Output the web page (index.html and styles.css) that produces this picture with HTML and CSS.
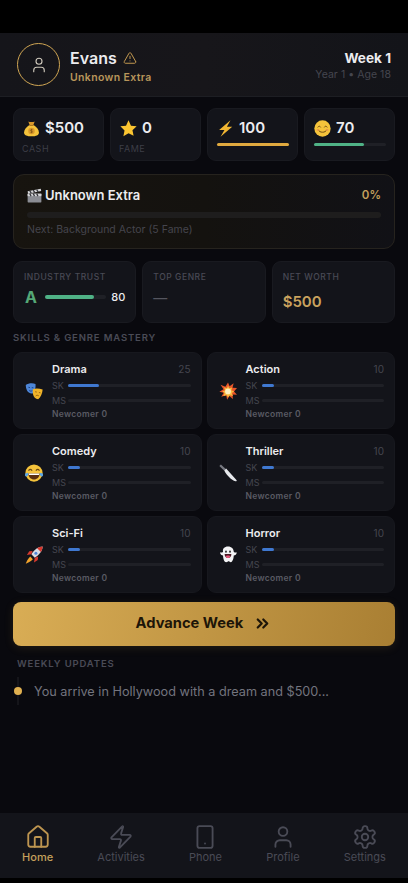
FILE: index.html
```html
<!DOCTYPE html>
<html lang="en">

<head>
    <meta charset="UTF-8">
    <meta name="viewport" content="width=device-width, initial-scale=1.0">
    <title>Hollywood Life</title>
    <link rel="stylesheet" href="styles.css">
</head>

<body>
    <svg class="defs" width="0" height="0">
        <symbol id="bag" viewBox="0 0 24 24">
            <path d="M7.500 2c2 1 7 1 9 0l-2 5.500h-5z" fill="#d9982b"/>
            <path d="M9 7h6c4.500 3 7.500 7 7.500 10.500 0 3.800-4 5.500-10.500 5.500s-10.500-1.700-10.500-5.500C1.500 14 4.500 10 9 7z" fill="#f5c33b"/>
            <path d="M9 7h6v1.300H9z" fill="#a8701c"/>
            <circle cx="12" cy="15.500" r="4.600" fill="#d9982b"/>
            <path d="M12 12.500v6M13.600 14c-1-.7-3.200-.5-3.200.7s3.200.8 3.200 2c0 1.200-2.200 1.300-3.200.6" stroke="#7d5010" stroke-width=".9" fill="none"/>
        </symbol>
        <symbol id="star" viewBox="0 0 24 24">
            <path d="M12 .5l3.500 7.500 8 .9-5.900 5.500 1.600 8L12 18.800l-7.200 4.100 1.600-8L.5 8.900l8-.9z" fill="#fbc531"/>
        </symbol>
        <symbol id="bolt" viewBox="0 0 24 24">
            <path d="M19 .5L3 14h7.500L5 23.500 21.500 9.500H14z" fill="#f2b632"/>
        </symbol>
        <symbol id="smile" viewBox="0 0 24 24">
            <circle cx="12" cy="12" r="11.500" fill="#f5c33b"/>
            <path d="M5.500 10c.8-1.800 3-1.800 3.800 0M14.700 10c.8-1.800 3-1.800 3.800 0" stroke="#6e4a12" stroke-width="1.300" fill="none" stroke-linecap="round"/>
            <path d="M6 14c1.500 4.500 10.500 4.500 12 0" stroke="#6e4a12" stroke-width="1.400" fill="none" stroke-linecap="round"/>
            <ellipse cx="5.500" cy="14" rx="2" ry="1.200" fill="#ef9a4a"/>
            <ellipse cx="18.500" cy="14" rx="2" ry="1.200" fill="#ef9a4a"/>
        </symbol>
        <symbol id="clapper" viewBox="0 0 24 24">
            <rect x="1" y="9" width="22" height="14" rx="1" fill="#8b8d94"/>
            <path d="M1 5L22 1l.7 3.800L1.700 9z" fill="#d4d5d8"/>
            <path d="M4.500 4.500l2.500 4M10 3.500l2.500 4M15.500 2.500l2.500 4" stroke="#33343a" stroke-width="1.900"/>
            <rect x="1" y="9" width="22" height="4" fill="#d4d5d8"/>
            <path d="M4.500 9l2 4M10 9l2 4M15.500 9l2 4" stroke="#33343a" stroke-width="1.900"/>
        </symbol>
        <symbol id="masks" viewBox="0 0 24 24">
            <path d="M1 4c3-2.500 9-3.200 13-1.500.5 4-.5 10-3.300 12.500-3 1-7-1-8.200-4C1.500 9 1 6.500 1 4z" fill="#4d86d8"/>
            <path d="M4.500 7l2.200.5M9 7.500l2.200.2M5.500 11c1 1.300 2.800 1.400 4.300.6" stroke="#173a78" stroke-width="1.100" fill="none"/>
            <path d="M10.500 9.500c3.500-1.500 8.500-1.200 13 .5-.2 5-2.500 10.500-6 13-3.500-.2-6-2.800-6.700-6.200-.5-2.400-.5-5-.3-7.300z" fill="#f0b429"/>
            <path d="M13.500 13l2.200.4M18.500 14l2.200.4M14 19c1-1.800 3.300-1.600 4.400-.5" stroke="#8a5a10" stroke-width="1.100" fill="none"/>
        </symbol>
        <symbol id="boom" viewBox="0 0 24 24">
            <path d="M12 .5l2.200 5 5.300-4-1.500 6 6 .5-4 4.500 4 4.500-6-.5 .5 6-4.700-3.700-3 4.700-1.200-6-6.600 2.300 3.300-5.500L.5 13l5.500-3.200L2 3.500l6.500 2.800z" fill="#e8562a"/>
            <path d="M12 4.500l1.700 3.800 3.800-1.100-1 3.800 3.800 1.600-3.200 2.200 1.600 3.800-4.300-.9L12 20.500l-1.900-3-4.300 1.100 1.600-4L4.500 12.500l3.500-1.600-1.300-3.800 3.800 1.100z" fill="#f8b93c"/>
            <circle cx="12" cy="12.500" r="3.800" fill="#fdf0c0"/>
        </symbol>
        <symbol id="laugh" viewBox="0 0 24 24">
            <circle cx="12" cy="12" r="11.500" fill="#f5c33b"/>
            <path d="M5 8.500c1-1.800 3-1.800 4.200 0M14.800 8.500c1.200-1.800 3.200-1.800 4.200 0" stroke="#6e4a12" stroke-width="1.400" fill="none" stroke-linecap="round"/>
            <path d="M4.500 12.500h15c0 5-3.500 8-7.500 8s-7.500-3-7.500-8z" fill="#5c3010"/>
            <path d="M5 12.500h14l-.4 2H5.400z" fill="#fff"/>
            <path d="M0 13c1.500-1 3-1.200 4.500-.5.300 2-1 4-3 4.200-1.500-.5-2-2.200-1.500-3.700zM24 13c-1.500-1-3-1.200-4.500-.5-.3 2 1 4 3 4.200 1.500-.5 2-2.200 1.500-3.700z" fill="#5aa7e8"/>
        </symbol>
        <symbol id="knife" viewBox="0 0 24 24">
            <path d="M.5 2.500L2.500.5 9 6.500 7 9z" fill="#777981"/>
            <path d="M7 8.500l2.500-2.500 14 15.500c.4.800-.4 1.900-1.500 1.500C16.500 21 10.500 15.500 7 8.500z" fill="#e6e8ec"/>
        </symbol>
        <symbol id="rocket" viewBox="0 0 24 24">
            <path d="M23.500.5c-5.500.3-11 3.500-15 10.500l4.500 4.500c6.500-4 10.500-10 10.500-15z" fill="#d8dbe2"/>
            <path d="M23.500.5c-2.500.1-5 .9-7.300 2.400l4.900 5c1.500-2.400 2.400-5 2.400-7.400z" fill="#d8392f"/>
            <circle cx="14.500" cy="9.500" r="2" fill="#4d86d8"/>
            <path d="M8.500 11L2.500 12l3.200-5 4.300-.5zM13 15.500L12 22l5-3.500.5-4.500z" fill="#d8392f"/>
            <path d="M7 14l3.500 3.500C8 20.500 3.500 22.500 1 23.500c1-2.500 3-7 6-9.500z" fill="#f2a32c"/>
        </symbol>
        <symbol id="ghost" viewBox="0 0 24 24">
            <path d="M12 .5c4.800 0 7.500 3 7.700 7.200.1 1 2.800 1.200 4 .5-.2 2.800-2.200 4.400-4 4.500-.2 3.400-.9 6-2.400 8-1.100 1.400-2.500.9-3.200.2-.8-.6-1.600-.7-2.600 0-1.200.9-2.900 1-4-.4-1.400-1.900-2-4.600-2.100-7.800-1.800-.1-3.800-1.700-4-4.500 1.200.7 3.900.5 4-.5C4.500 3.500 7.200.500 12 .5z" fill="#f4f4f6"/>
            <ellipse cx="9.300" cy="7.500" rx="1.200" ry="1.500" fill="#222"/>
            <ellipse cx="14.700" cy="7.500" rx="1.200" ry="1.500" fill="#222"/>
            <path d="M7.500 10.500h9c0 3.500-2 5.500-4.500 5.500s-4.500-2-4.500-5.500z" fill="#4a1a24"/>
            <path d="M9 13.500c1-1 5-1 6 0-.7 1.600-1.800 2.500-3 2.500s-2.300-.9-3-2.500z" fill="#e8557a"/>
        </symbol>
    </svg>

    <div class="notch"></div>

    <header class="top">
        <div class="avatar">
            <svg class="line thin" width="18" height="18" viewBox="0 0 24 24"><path d="M19 21v-2a4 4 0 0 0-4-4H9a4 4 0 0 0-4 4v2"/><circle cx="12" cy="7" r="4"/></svg>
        </div>
        <div class="who">
            <div class="name">Evans
                <svg class="line warn" width="14" height="14" viewBox="0 0 24 24"><path d="m21.730 18-8-14a2 2 0 0 0-3.480 0l-8 14A2 2 0 0 0 4 21h16a2 2 0 0 0 1.730-3"/><path d="M12 9v4"/><path d="M12 17h.01"/></svg>
            </div>
            <div class="rank">Unknown Extra</div>
        </div>
        <div class="when">
            <div class="week">Week 1</div>
            <div class="age">Year 1 • Age 18</div>
        </div>
    </header>

    <main class="content">
        <section class="stats">
            <div class="stat">
                <div class="stat_top"><svg class="emoji"><use href="#bag"/></svg>$500</div>
                <div class="stat_label">CASH</div>
            </div>
            <div class="stat">
                <div class="stat_top"><svg class="emoji"><use href="#star"/></svg>0</div>
                <div class="stat_label">FAME</div>
            </div>
            <div class="stat">
                <div class="stat_top"><svg class="emoji"><use href="#bolt"/></svg>100</div>
                <div class="stat_bar"><div class="fill gold" style="width:100%"></div></div>
            </div>
            <div class="stat">
                <div class="stat_top"><svg class="emoji"><use href="#smile"/></svg>70</div>
                <div class="stat_bar"><div class="fill green" style="width:70%"></div></div>
            </div>
        </section>

        <section class="career">
            <div class="career_top">
                <div class="career_title"><svg class="emoji"><use href="#clapper"/></svg>Unknown Extra</div>
                <div class="career_pct">0%</div>
            </div>
            <div class="career_bar"></div>
            <div class="career_next">Next: Background Actor (5 Fame)</div>
        </section>

        <section class="info">
            <div class="info_card">
                <div class="info_label">INDUSTRY TRUST</div>
                <div class="trust">
                    <span class="grade">A</span>
                    <div class="trust_bar"><div class="fill green" style="width:80%"></div></div>
                    <span class="trust_num">80</span>
                </div>
            </div>
            <div class="info_card">
                <div class="info_label">TOP GENRE</div>
                <div class="dash">—</div>
            </div>
            <div class="info_card">
                <div class="info_label">NET WORTH</div>
                <div class="worth">$500</div>
            </div>
        </section>

        <h2 class="section_title">SKILLS &amp; GENRE MASTERY</h2>

        <section class="genres">
            <div class="genre">
                <svg class="emoji"><use href="#masks"/></svg>
                <div class="genre_body">
                    <div class="genre_head"><span class="genre_name">Drama</span><span class="genre_val">25</span></div>
                    <div class="meter"><span>SK</span><div class="meter_bar"><div class="fill blue" style="width:25%"></div></div></div>
                    <div class="meter"><span>MS</span><div class="meter_bar"></div></div>
                    <div class="genre_rank">Newcomer 0</div>
                </div>
            </div>
            <div class="genre">
                <svg class="emoji"><use href="#boom"/></svg>
                <div class="genre_body">
                    <div class="genre_head"><span class="genre_name">Action</span><span class="genre_val">10</span></div>
                    <div class="meter"><span>SK</span><div class="meter_bar"><div class="fill blue" style="width:10%"></div></div></div>
                    <div class="meter"><span>MS</span><div class="meter_bar"></div></div>
                    <div class="genre_rank">Newcomer 0</div>
                </div>
            </div>
            <div class="genre">
                <svg class="emoji"><use href="#laugh"/></svg>
                <div class="genre_body">
                    <div class="genre_head"><span class="genre_name">Comedy</span><span class="genre_val">10</span></div>
                    <div class="meter"><span>SK</span><div class="meter_bar"><div class="fill blue" style="width:10%"></div></div></div>
                    <div class="meter"><span>MS</span><div class="meter_bar"></div></div>
                    <div class="genre_rank">Newcomer 0</div>
                </div>
            </div>
            <div class="genre">
                <svg class="emoji"><use href="#knife"/></svg>
                <div class="genre_body">
                    <div class="genre_head"><span class="genre_name">Thriller</span><span class="genre_val">10</span></div>
                    <div class="meter"><span>SK</span><div class="meter_bar"><div class="fill blue" style="width:10%"></div></div></div>
                    <div class="meter"><span>MS</span><div class="meter_bar"></div></div>
                    <div class="genre_rank">Newcomer 0</div>
                </div>
            </div>
            <div class="genre">
                <svg class="emoji"><use href="#rocket"/></svg>
                <div class="genre_body">
                    <div class="genre_head"><span class="genre_name">Sci-Fi</span><span class="genre_val">10</span></div>
                    <div class="meter"><span>SK</span><div class="meter_bar"><div class="fill blue" style="width:10%"></div></div></div>
                    <div class="meter"><span>MS</span><div class="meter_bar"></div></div>
                    <div class="genre_rank">Newcomer 0</div>
                </div>
            </div>
            <div class="genre">
                <svg class="emoji"><use href="#ghost"/></svg>
                <div class="genre_body">
                    <div class="genre_head"><span class="genre_name">Horror</span><span class="genre_val">10</span></div>
                    <div class="meter"><span>SK</span><div class="meter_bar"><div class="fill blue" style="width:10%"></div></div></div>
                    <div class="meter"><span>MS</span><div class="meter_bar"></div></div>
                    <div class="genre_rank">Newcomer 0</div>
                </div>
            </div>
        </section>

        <button class="advance">Advance Week
            <svg class="line bold" width="19" height="19" viewBox="0 0 24 24"><path d="m6 17 5-5-5-5"/><path d="m13 17 5-5-5-5"/></svg>
        </button>

        <div class="updates">
            <h2 class="section_title">WEEKLY UPDATES</h2>
            <div class="update">
                <div class="update_mark"><div class="update_dot"></div></div>
                <p>You arrive in Hollywood with a dream and $500...</p>
            </div>
        </div>
    </main>

    <nav class="tabs">
        <div class="tab active">
            <svg class="line" width="26" height="26" viewBox="0 0 24 24"><path d="M15 21v-8a1 1 0 0 0-1-1h-4a1 1 0 0 0-1 1v8"/><path d="M3 10a2 2 0 0 1 .709-1.528l7-5.999a2 2 0 0 1 2.582 0l7 5.999A2 2 0 0 1 21 10v9a2 2 0 0 1-2 2H5a2 2 0 0 1-2-2z"/></svg>
            <span>Home</span>
        </div>
        <div class="tab">
            <svg class="line" width="26" height="26" viewBox="0 0 24 24"><path d="M4 14a1 1 0 0 1-.78-1.630l9.900-10.200a.5.5 0 0 1 .86.46l-1.920 6.020A1 1 0 0 0 13 10h7a1 1 0 0 1 .78 1.630l-9.900 10.200a.5.5 0 0 1-.86-.46l1.920-6.020A1 1 0 0 0 11 14z"/></svg>
            <span>Activities</span>
        </div>
        <div class="tab">
            <svg class="line" width="26" height="26" viewBox="0 0 24 24"><rect width="14" height="20" x="5" y="2" rx="2" ry="2"/><path d="M12 18h.01"/></svg>
            <span>Phone</span>
        </div>
        <div class="tab">
            <svg class="line" width="26" height="26" viewBox="0 0 24 24"><path d="M19 21v-2a4 4 0 0 0-4-4H9a4 4 0 0 0-4 4v2"/><circle cx="12" cy="7" r="4"/></svg>
            <span>Profile</span>
        </div>
        <div class="tab">
            <svg class="line" width="26" height="26" viewBox="0 0 24 24"><path d="M12.220 2h-.44a2 2 0 0 0-2 2v.18a2 2 0 0 1-1 1.730l-.43.25a2 2 0 0 1-2 0l-.15-.08a2 2 0 0 0-2.730.73l-.22.38a2 2 0 0 0 .73 2.730l.15.1a2 2 0 0 1 1 1.720v.51a2 2 0 0 1-1 1.740l-.15.09a2 2 0 0 0-.73 2.730l.22.38a2 2 0 0 0 2.730.73l.15-.08a2 2 0 0 1 2 0l.43.25a2 2 0 0 1 1 1.730V20a2 2 0 0 0 2 2h.44a2 2 0 0 0 2-2v-.18a2 2 0 0 1 1-1.730l.43-.25a2 2 0 0 1 2 0l.15.08a2 2 0 0 0 2.730-.73l.22-.39a2 2 0 0 0-.73-2.730l-.15-.08a2 2 0 0 1-1-1.740v-.5a2 2 0 0 1 1-1.740l.15-.09a2 2 0 0 0 .73-2.730l-.22-.38a2 2 0 0 0-2.730-.73l-.15.08a2 2 0 0 1-2 0l-.43-.25a2 2 0 0 1-1-1.730V4a2 2 0 0 0-2-2z"/><circle cx="12" cy="12" r="3"/></svg>
            <span>Settings</span>
        </div>
    </nav>
</body>

</html>
```

FILE: styles.css
```css
* {
    box-sizing: border-box;
}

html, body {
    margin: 0;
    height: 883px;
    overflow: hidden;
}

body {
    display: flex;
    flex-direction: column;
    background-color: #000;
    color: #ececef;
    font-family: Inter, "Liberation Sans", sans-serif;
}

.defs {
    display: block;
    height: 0;
}

.line {
    fill: none;
    stroke: currentColor;
    stroke-width: 1.700;
    stroke-linecap: round;
    stroke-linejoin: round;
    flex: none;
}
.line.thin { stroke-width: 1.500; }
.line.bold { stroke-width: 2.800; }

.emoji {
    flex: none;
    width: 17px;
    height: 17px;
}

.fill {
    height: 100%;
    border-radius: 3px;
}
.gold { background-color: #e0a93f; }
.green { background-color: #4fb286; }
.blue { background-color: #3f78d0; }

.notch {
    height: 33px;
    flex: none;
}

/* header */
.top {
    display: flex;
    align-items: center;
    height: 64px;
    flex: none;
    padding: 0 13px 0 17px;
    background: linear-gradient(90deg, #15151a, #17161a 50%, #131419);
    border-bottom: 1px solid #1d1e23;
}

.avatar {
    display: flex;
    align-items: center;
    justify-content: center;
    width: 43px;
    height: 43px;
    border: 1.500px solid #cfa553;
    border-radius: 50%;
    color: #cfc9bc;
}

.who {
    margin-left: 10px;
    padding-top: 3px;
    flex: 1;
}

.name {
    display: flex;
    align-items: center;
    gap: 6px;
    font-size: 16px;
    font-weight: 600;
    line-height: 18px;
}

.warn {
    color: #c49a50;
}

.rank {
    margin-top: 4px;
    font-size: 10.500px;
    font-weight: 600;
    letter-spacing: .35px;
    color: #b8955a;
}

.when {
    text-align: right;
    padding: 1px 4px 0 0;
}

.week {
    font-size: 13.600px;
    font-weight: 700;
    line-height: 18px;
}

.age {
    margin-top: 1px;
    font-size: 10.500px;
    letter-spacing: .05px;
    color: #45464f;
}

/* main column */
.content {
    flex: 1;
    display: flex;
    flex-direction: column;
    padding: 11px 13px 0;
    background-color: #09090e;
}

.stats {
    display: grid;
    grid-template-columns: repeat(4, 1fr);
    gap: 6px;
    height: 53px;
}

.stat {
    padding: 9px 8px 0 9px;
    background-color: #13141a;
    border: 1px solid #191a20;
    border-radius: 9px;
}

.stat_top {
    display: flex;
    align-items: center;
    gap: 5px;
    font-size: 15px;
    font-weight: 600;
    line-height: 20px;
}

.stat_label {
    margin: 5px 0 0 -1px;
    font-size: 9px;
    letter-spacing: .5px;
    color: #3d3e47;
}

.stat_bar {
    height: 3px;
    margin-top: 5px;
    background-color: #1f2026;
    border-radius: 3px;
}

.career {
    height: 75px;
    margin-top: 13px;
    padding: 12px 13px 0;
    background: linear-gradient(90deg, #17140f, #14120f 50%, #111116);
    border: 1px solid #26231e;
    border-radius: 11px;
}

.career_top {
    display: flex;
    align-items: center;
    justify-content: space-between;
}

.career_title {
    display: flex;
    align-items: center;
    gap: 3px;
    font-size: 13px;
    font-weight: 600;
    line-height: 16px;
}

.career_title .emoji {
    width: 15px;
    height: 15px;
}

.career_pct {
    font-size: 11.500px;
    font-weight: 600;
    color: #c4a05c;
}

.career_bar {
    height: 6px;
    margin-top: 9px;
    background-color: #1e1d1d;
    border-radius: 3px;
}

.career_next {
    margin-top: 5px;
    font-size: 10.500px;
    line-height: 14px;
    color: #45454d;
}

.info {
    display: grid;
    grid-template-columns: repeat(3, 1fr);
    gap: 6px;
    height: 62px;
    margin-top: 12px;
}

.info_card {
    padding: 10px 10px 0;
    background-color: #13141a;
    border: 1px solid #191a20;
    border-radius: 9px;
}

.info_label {
    font-size: 8.500px;
    font-weight: 500;
    letter-spacing: .55px;
    line-height: 11px;
    color: #494a55;
}

.trust {
    display: flex;
    align-items: center;
    margin-top: 2px;
}

.grade {
    font-size: 16px;
    font-weight: 700;
    line-height: 24px;
    margin-left: 1px;
    color: #55a877;
}

.trust_bar {
    flex: 1;
    height: 4px;
    margin: 0 5px 0 8px;
    background-color: #1f2026;
    border-radius: 3px;
}

.trust_num {
    font-size: 11px;
    font-weight: 500;
}

.dash {
    margin-top: 4px;
    font-size: 14px;
    line-height: 22px;
    color: #55565f;
}

.worth {
    margin-top: 9px;
    font-size: 15px;
    font-weight: 600;
    line-height: 20px;
    color: #c9a25e;
}

.section_title {
    margin: 9px 0 8px;
    font-size: 9.500px;
    font-weight: 600;
    letter-spacing: .85px;
    line-height: 12px;
    color: #4a4b56;
}

.genres {
    display: grid;
    grid-template-columns: 1fr 1fr;
    grid-auto-rows: 77px;
    gap: 5px;
}

.genre {
    display: flex;
    align-items: center;
    padding: 0 10px 0 11px;
    background-color: #13141a;
    border: 1px solid #17181e;
    border-radius: 9px;
}

.genre .emoji {
    width: 18px;
    height: 18px;
    margin-right: 9px;
}

.genre_body {
    flex: 1;
}

.genre_head {
    display: flex;
    align-items: center;
    justify-content: space-between;
    line-height: 16px;
    margin-bottom: 1px;
}

.genre_name {
    font-size: 11px;
    font-weight: 600;
}

.genre_val {
    font-size: 10px;
    color: #45464f;
}

.meter {
    display: flex;
    align-items: center;
    height: 15px;
    font-size: 9px;
    color: #45464f;
}

.meter span {
    width: 16px;
    flex: none;
}

.meter_bar {
    flex: 1;
    height: 3px;
    background-color: #1f2026;
    border-radius: 3px;
}

.genre_rank {
    font-size: 8.500px;
    font-weight: 600;
    letter-spacing: .3px;
    line-height: 12px;
    color: #5a5b64;
}

.advance {
    display: flex;
    align-items: center;
    justify-content: center;
    gap: 10px;
    height: 44px;
    flex: none;
    margin-top: 9px;
    padding: 0 0 2px;
    border: none;
    border-radius: 8px;
    background: linear-gradient(100deg, #d9ad55, #a97f33);
    box-shadow: 0 2px 10px rgba(180, 140, 60, .14);
    color: #1d1508;
    font-family: inherit;
    font-size: 14.700px;
    font-weight: 700;
}

.updates {
    padding-left: 4px;
}

.updates .section_title {
    margin: 12px 0 7px;
}

.update {
    display: flex;
    align-items: center;
    height: 28px;
}

.update_mark {
    display: flex;
    align-items: center;
    justify-content: center;
    width: 2px;
    height: 100%;
    margin: 0 15px 0 0;
    background-color: #15151a;
}

.update_dot {
    flex: none;
    width: 8px;
    height: 8px;
    border-radius: 50%;
    background-color: #e0b050;
}

.update p {
    margin: 0;
    font-size: 12.700px;
    color: #73747e;
}

/* bottom tabs */
.tabs {
    display: flex;
    justify-content: space-around;
    align-items: flex-start;
    height: 65px;
    flex: none;
    margin-bottom: 5px;
    padding-top: 11px;
    background-color: #13141a;
}

.tab {
    display: flex;
    flex-direction: column;
    align-items: center;
    font-size: 11px;
    color: #4a4b56;
}

.tab.active {
    color: #c4a05c;
    font-weight: 500;
}

.tab.active .line {
    color: #bd9550;
}
```
